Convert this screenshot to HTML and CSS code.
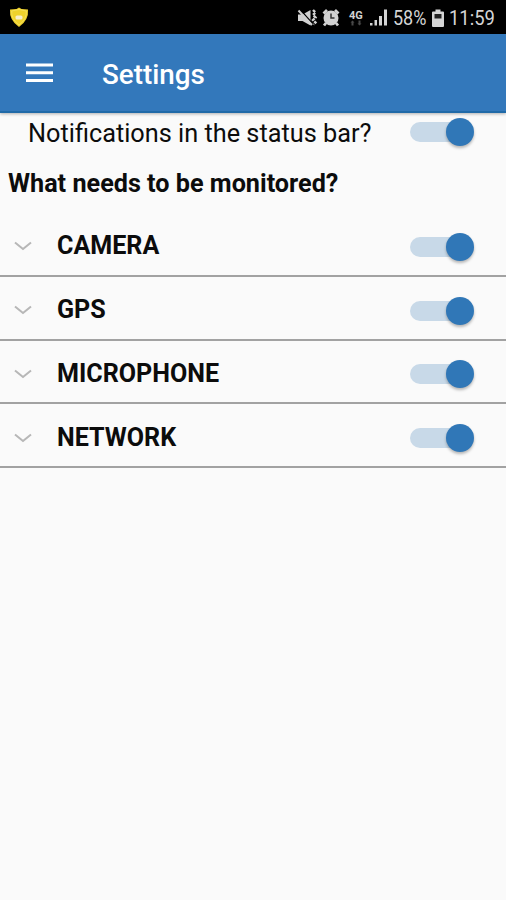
FILE: index.html
```html
<!DOCTYPE html>
<html lang="en">
<head>
<meta charset="utf-8">
<title>Settings</title>
<link rel="stylesheet" href="styles.css">
</head>
<body>
<div class="status">
  <svg class="shield" width="20" height="21" viewBox="0 0 20 21"><path d="M10 0.5 L12.500 2 L19 2.500 Q20 13 10 20 Q0 13 1 2.500 L7.500 2Z" fill="#efd22c"/><path d="M10 2.5 L17.3 4 Q18 12 10 18 Q2 12 2.7 4Z" fill="none" stroke="#f5df57" stroke-width="1"/><rect x="6.500" y="8.500" width="7" height="4" rx="1.5" fill="#f7eecb"/></svg>
  <svg class="indicators" width="92" height="20" viewBox="297 8 92 20" fill="#d2d2d2">
    <path d="M298 14.500h4.500l8-4.500v15.500l-8-4.500h-4.500z"/>
    <path d="M300.500 10l12 13.500" stroke="#000" stroke-width="1.300"/>
    <path d="M298.500 10.500l13.500 14.500" stroke="#d2d2d2" stroke-width="2"/>
    <path d="M313 10l2.500 2.500-2.500 2.500 2.500 2.500-2.500 2.500 2.500 2.500-2 2" fill="none" stroke="#d2d2d2" stroke-width="2.400" stroke-dasharray="3 1"/>
    <circle cx="331" cy="18" r="7.500"/><path d="M323.500 13.500l3.500-3.500M338.500 13.500l-3.500-3.500M326 23l-2 2.500M336 23l2 2.500" stroke="#d2d2d2" stroke-width="2.800"/>
    <path d="M331 13.500v4.500h3.500" fill="none" stroke="#333" stroke-width="1.500"/>
    <text x="349" y="18.500" class="net">4G</text>
    <path d="M352.500 20.500l2 2h-1v3h-2v-3h-1zM359.500 25.500l-2-2h1v-3h2v3h1z" fill="#484848"/>
    <path d="M370 23h2.500v2.500H370zM374.500 20h2.500v5.500h-2.500zM379 16h3v9.500h-3zM384 9.500h3v16h-3z"/>
  </svg>
  <span class="percent">58%</span>
  <svg class="battery" width="12" height="19" viewBox="0 0 12 19"><path d="M3.500 0.500h5v2H11q1 0 1 1V17q0 1-1 1H1q-1 0-1-1V3.500q0-1 1-1h2.500z" fill="#d5d5d5"/><path d="M2.500 5h7v4.500h-7z" fill="#222"/></svg>
  <span class="clock">11:59</span>
</div>
<header class="appbar">
  <svg class="menu" width="27" height="20" viewBox="0 0 27 20" fill="#fff"><path d="M0 0.500h27v3H0zM0 8.200h27v3H0zM0 16h27v3H0z"/></svg>
  <h1>Settings</h1>
</header>
<main>
  <div class="notify"><span class="label">Notifications in the status bar?</span><span class="switch"></span></div>
  <h2>What needs to be monitored?</h2>
  <div class="row"><svg class="chevron" width="18" height="10" viewBox="0 0 18 10"><path d="M1 1.500l8 6.500 8-6.500"/></svg><span class="name">CAMERA</span><span class="switch"></span></div>
  <div class="row"><svg class="chevron" width="18" height="10" viewBox="0 0 18 10"><path d="M1 1.500l8 6.500 8-6.500"/></svg><span class="name">GPS</span><span class="switch"></span></div>
  <div class="row"><svg class="chevron" width="18" height="10" viewBox="0 0 18 10"><path d="M1 1.500l8 6.500 8-6.500"/></svg><span class="name">MICROPHONE</span><span class="switch"></span></div>
  <div class="row"><svg class="chevron" width="18" height="10" viewBox="0 0 18 10"><path d="M1 1.500l8 6.500 8-6.500"/></svg><span class="name">NETWORK</span><span class="switch"></span></div>
</main>
</body>
</html>
```
FILE: styles.css
```css
* { box-sizing: border-box; }
body { margin: 0; height: 900px; overflow: hidden; background: #fafafa; color: #0c0c0c; font-family: Roboto, "Liberation Sans", sans-serif; }
svg { display: block; flex: none; }
.status { height: 34px; background: #000; color: #d5d5d5; display: flex; align-items: center; padding: 2px 0 0 9px; font-size: 20px; line-height: 32px; white-space: nowrap; }
.shield { margin-top: -1px; }
.indicators { margin-left: 268px; }
.net { font: 700 11px Roboto, sans-serif; }
.percent { width: 37px; margin-left: 4px; transform: scaleX(.9); transform-origin: left; }
.battery { margin-left: 2px; }
.clock { margin-left: 5px; transform: scaleX(.92); transform-origin: left; }
.appbar { height: 79px; background: #3378bb; border-bottom: 2px solid #206aa8; display: flex; align-items: center; padding: 4px 0 0 26px; box-shadow: 0 1px 3px rgba(0,0,0,.3); }
.menu { margin-top: -3px; }
h1 { margin: 0 0 0 49px; color: #fff; font-size: 27.8px; line-height: 32px; font-weight: 500; }
.notify { height: 41px; display: flex; align-items: center; justify-content: space-between; padding: 0 32px 2px 28px; }
.notify .switch { margin-top: -2px; }
.label { font-size: 25.3px; line-height: 30px; white-space: nowrap; padding-top: 2px; }
h2 { margin: 0; height: 59px; padding: 15px 0 0 8px; font-size: 25.2px; line-height: 30px; font-weight: 700; white-space: nowrap; }
.row { height: 63.8px; border-bottom: 2px solid #a2a2a2; display: flex; align-items: center; padding: 5px 32px 0 14px; }
.chevron { fill: none; stroke: #b7b7b7; stroke-width: 2; }
.name { margin-left: 25px; font-size: 25.1px; line-height: 30px; font-weight: 700; }
.row .switch { margin-left: auto; margin-top: 1px; }
.switch { width: 64px; height: 20px; flex: none; border-radius: 10px; background: linear-gradient(#c8d9e8, #c8d9e8) left / 54px 100% no-repeat; display: flex; align-items: center; justify-content: flex-end; }
.switch::after { content: ""; width: 28px; height: 28px; flex: none; border-radius: 50%; background: #3077b7; box-shadow: 0 2px 3px rgba(0,0,0,.28); }
```
